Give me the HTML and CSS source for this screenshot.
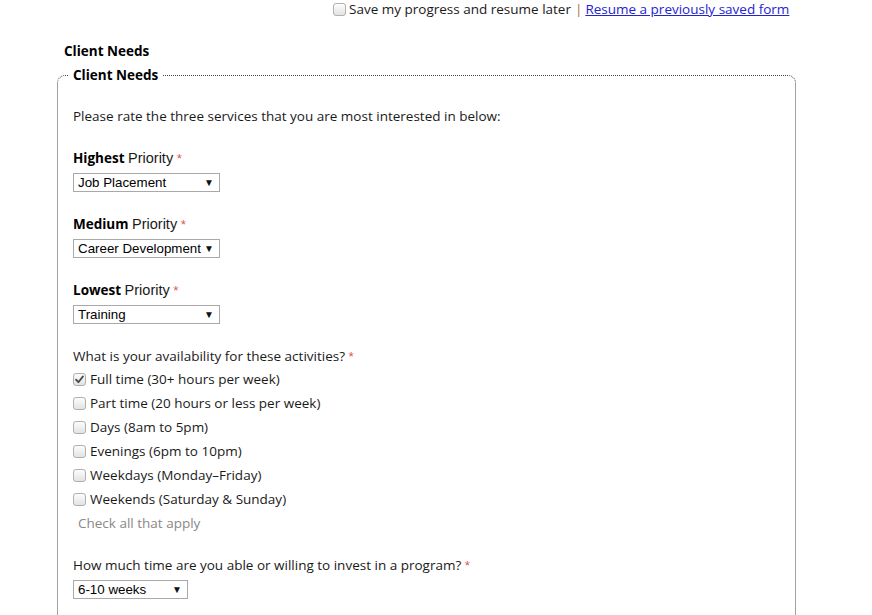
FILE: index.html
```html
<!DOCTYPE html>
<html>
<head>
<meta charset="utf-8">
<link rel="stylesheet" href="styles.css">
</head>
<body>
<div class="topbar">
  <label class="save"><span class="cb"></span> Save my progress and resume later</label>
  <span class="sep">|</span>
  <a href="#" class="resume">Resume a previously saved form</a>
</div>
<div class="page">
  <h2 class="section-title">Client Needs</h2>
  <fieldset class="box">
    <legend>Client Needs</legend>
    <p class="intro">Please rate the three services that you are most interested in below:</p>

    <div class="field">
      <div class="label"><b>Highest</b> <span class="arial">Priority</span> <span class="req">*</span></div>
      <div class="select w147"><span>Job Placement</span><span class="arrow">▼</span></div>
    </div>
    <div class="field">
      <div class="label"><b>Medium</b> <span class="arial">Priority</span> <span class="req">*</span></div>
      <div class="select w147"><span>Career Development</span><span class="arrow">▼</span></div>
    </div>
    <div class="field">
      <div class="label"><b>Lowest</b> <span class="arial">Priority</span> <span class="req">*</span></div>
      <div class="select w147"><span>Training</span><span class="arrow">▼</span></div>
    </div>

    <div class="field checks">
      <div class="label">What is your availability for these activities? <span class="req">*</span></div>
      <label class="opt"><span class="cb checked"><svg viewBox="0 0 13 13" width="13" height="13"><path d="M3 6.6 L5.4 9.2 L10 3.4" fill="none" stroke="#4a4a4a" stroke-width="1.8" stroke-linecap="round" stroke-linejoin="round"/></svg></span> Full time (30+ hours per week)</label>
      <label class="opt"><span class="cb"></span> Part time (20 hours or less per week)</label>
      <label class="opt"><span class="cb"></span> Days (8am to 5pm)</label>
      <label class="opt"><span class="cb"></span> Evenings (6pm to 10pm)</label>
      <label class="opt"><span class="cb"></span> Weekdays (Monday–Friday)</label>
      <label class="opt"><span class="cb"></span> Weekends (Saturday &amp; Sunday)</label>
      <div class="hint">Check all that apply</div>
    </div>

    <div class="field">
      <div class="label">How much time are you able or willing to invest in a program? <span class="req">*</span></div>
      <div class="select w115"><span>6-10 weeks</span><span class="arrow">▼</span></div>
    </div>
  </fieldset>
</div>
</body>
</html>
```
FILE: styles.css
```css
html, body {
  margin: 0;
  padding: 0;
  background: #fff;
}
body {
  font-family: "Open Sans", "DejaVu Sans", sans-serif;
  font-size: 13.5px;
  color: #1a1a1a;
  width: 872px;
  height: 615px;
  overflow: hidden;
}
.topbar {
  display: flex;
  align-items: center;
  padding-left: 333px;
  height: 18px;
  white-space: nowrap;
}
.save {
  display: flex;
  align-items: center;
  gap: 3px;
}
.sep {
  color: #a07040;
  margin: 0 3px 0 4px;
}
.resume {
  color: #2323d0;
  text-decoration: underline;
}
.cb {
  display: inline-block;
  flex: none;
  box-sizing: border-box;
  width: 13px;
  height: 13px;
  border: 1px solid #b0b0b0;
  border-radius: 3px;
  background: linear-gradient(#fdfdfd, #e2e2e2);
  position: relative;
}
.cb svg {
  position: absolute;
  left: -1px;
  top: -1px;
}
.page {
  padding-left: 57px;
  padding-top: 24px;
}
.section-title {
  margin: 0 0 0 7px;
  font-size: 13.5px;
  font-weight: bold;
  line-height: 18px;
  color: #000;
}
.box {
  width: 739px;
  box-sizing: border-box;
  border: 1px dotted #444;
  border-radius: 8px;
  margin: 0;
  margin-top: 6px;
  padding: 10px 15px 40px 15px;
  height: 600px;
}
.box legend {
  font-weight: bold;
  color: #000;
  padding: 0 5px 0 5px;
  margin-left: -5px;
  line-height: 18px;
}
.intro {
  margin: 13px 0 24px 0;
  line-height: 18px;
}
.field {
  margin-bottom: 23px;
}
.label {
  line-height: 18px;
  margin-bottom: 5px;
}
.label b {
  font-weight: bold;
  color: #000;
}
.arial {
  font-family: "Liberation Sans", Arial, sans-serif;
  font-size: 14.5px;
}
.req {
  color: #e05555;
  font-family: "Liberation Sans", Arial, sans-serif;
}
.select {
  display: flex;
  justify-content: space-between;
  align-items: center;
  box-sizing: border-box;
  height: 19px;
  border: 1px solid #a9a9a9;
  padding: 0 5px 0 4px;
  font-family: "Liberation Sans", Arial, sans-serif;
  font-size: 13.333px;
  color: #000;
  background: #fff;
}
.w147 { width: 147px; }
.w115 { width: 115px; }
.arrow {
  font-size: 10px;
  color: #111;
}
.checks {
  margin-bottom: 21px;
}
.checks .label {
  margin-bottom: 1px;
}
.opt {
  display: flex;
  align-items: center;
  gap: 4px;
  height: 24px;
  line-height: 18px;
}
.hint {
  color: #888;
  margin-left: 5px;
  line-height: 24px;
}
```
